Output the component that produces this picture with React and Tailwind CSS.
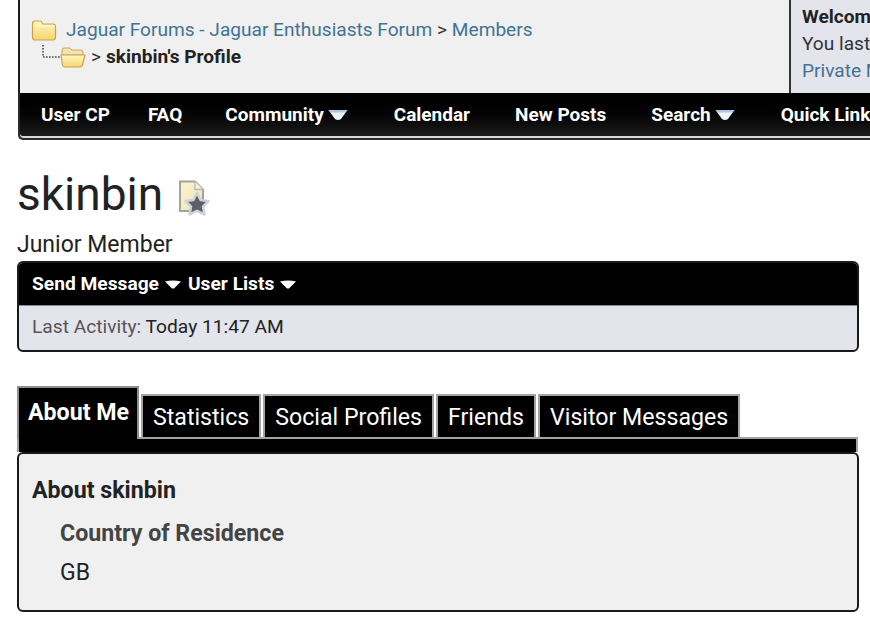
const Folder = ({ open, className }) => (
  <svg viewBox="0 0 26 22" className={className}>
    <defs>
      <linearGradient id={open ? "fo" : "fc"} x1="0" y1="0" x2="0" y2="1">
        <stop offset="0" stopColor="#fff6c0" />
        <stop offset="1" stopColor="#f5d66e" />
      </linearGradient>
    </defs>
    {open ? (
      <>
        <path d="M2 5 Q2 2 4 2 H10 L12 4 H21 Q23 4 23 6 V9 H2 Z" fill="#efe2b4" stroke="#cfa758" strokeWidth="1" />
        <path d="M1 9 H25 L22.5 19 Q22 21 20 21 H5 Q3 21 2.6 19 Z" fill="url(#fo)" stroke="#cf9f4a" strokeWidth="1.2" />
      </>
    ) : (
      <>
        <path d="M1.5 5 Q1.5 2 4 2 H10 L12 5 H22 Q24.5 5 24.5 7.5 V18 Q24.5 21 22 21 H4 Q1.5 21 1.5 18 Z" fill="url(#fc)" stroke="#cf9f4a" strokeWidth="1.2" />
        <path d="M2 7 H24" stroke="#fffbe6" strokeWidth="1" />
      </>
    )}
  </svg>
);

const NavArrow = () => (
  <svg viewBox="0 0 20 12" className="w-[20px] h-[12px] ml-[4px] blur-[0.4px]">
    <path d="M0.5 1 H19.5 L13 10 Q10 12 7 10 Z" fill="#eef5fb" />
    <path d="M0.5 1 H19.5 L17 3.5 H3 Z" fill="#a9c6e4" />
  </svg>
);

const SmallArrow = () => (
  <svg viewBox="0 0 16 9" className="w-[16px] h-[9px] ml-[6px] mt-[1px]">
    <path d="M0 1.5 Q8 -0.5 16 1.5 L9 8.5 H7 Z" fill="#ffffff" />
  </svg>
);

const ProfileIcon = () => (
  <svg viewBox="0 0 32 36" className="w-[32px] h-[36px] ml-[15px] mt-[17px] shrink-0 blur-[0.5px]">
    <defs>
      <linearGradient id="pg" x1="0" y1="0" x2="1" y2="1">
        <stop offset="0" stopColor="#fbf4d2" />
        <stop offset="1" stopColor="#efe3b4" />
      </linearGradient>
    </defs>
    <path d="M2 1.5 H17 L25 9.5 V31 H2 Z" fill="url(#pg)" stroke="#a3a399" strokeWidth="2" />
    <path d="M17 1.5 V9.5 H25" fill="#f7f3e2" stroke="#b8b8ae" strokeWidth="1.3" />
    <path d="M19 13 L22.6 20 L30.5 21 L25 26.6 L26.4 34.4 L19 30.8 L11.6 34.4 L13 26.6 L7.5 21 L15.4 20 Z" fill="#5b6068" stroke="#cfd3d8" strokeWidth="2.6" strokeLinejoin="round" />
  </svg>
);

const Tab = ({ children }) => (
  <div className="relative h-[45px] mr-[2px] flex items-center justify-center px-[10px] pt-[2px] bg-black border-2 border-[#a3a3a3] text-white text-[23.15px] leading-none whitespace-nowrap">
    {children}
  </div>
);

export default function App() {
  return (
    <div className="w-[870px] h-[619px] overflow-hidden bg-white text-[#222222] font-['Roboto',sans-serif]">
      <div className="w-[900px] ml-[18px]">
        <div className="h-[93px] flex bg-[#f0f0f1] border-l-2 border-[#1c1c1c]">
          <div className="w-[769px] shrink-0 pl-[11px] pt-[17px]">
            <div className="flex items-center h-[25px]">
              <Folder className="w-[26px] h-[22px] shrink-0" />
              <span className="ml-[9px] text-[19.1px] leading-none text-[#417394] whitespace-nowrap">
                Jaguar Forums - Jaguar Enthusiasts Forum <span className="text-[#333333]">&gt;</span> Members
              </span>
            </div>
            <div className="flex items-center h-[27px] mt-[1px]">
              <svg viewBox="0 0 18 14" className="w-[18px] h-[14px] ml-[11px] -mt-[9px] shrink-0">
                <path d="M1 0 V12 H18" fill="none" stroke="#444" strokeWidth="1.6" strokeDasharray="1.6 1.4" />
              </svg>
              <Folder open className="w-[26px] h-[22px] shrink-0" />
              <span className="ml-[5px] text-[19.1px] leading-none text-[#333]">&gt;</span>
              <span className="ml-[5px] text-[19.1px] leading-none font-bold text-[#222] whitespace-nowrap">skinbin's Profile</span>
            </div>
          </div>
          <div className="flex-1 bg-[#e4e4ec] border-l-2 border-[#333] pl-[11px] pt-[3px] text-[19.1px] leading-[27px] whitespace-nowrap">
            <div className="font-bold">Welcome, skinbin</div>
            <div className="text-[#333]">You last visited</div>
            <div className="text-[#417394]">Private Messages</div>
          </div>
        </div>
        <div className="h-[47px] rounded-bl-[5px] border-l-2 border-b-2 border-[#2a2a2a] bg-gradient-to-b from-black to-[#1e1e1e] shadow-[inset_0_-2px_0_#d8d8d8] flex items-center text-white text-[19px] font-bold whitespace-nowrap pb-[1px]">
          <span className="ml-[21px]">User CP</span>
          <span className="ml-[38px]">FAQ</span>
          <span className="ml-[43px] flex items-center">Community<NavArrow /></span>
          <span className="ml-[46px]">Calendar</span>
          <span className="ml-[45px]">New Posts</span>
          <span className="ml-[45px] flex items-center">Search<NavArrow /></span>
          <span className="ml-[46px]">Quick Links</span>
        </div>
      </div>

      <div className="w-[841px] ml-[17px]">
        <div className="flex items-start h-[91px] pt-[23px]">
          <h1 className="text-[46px] leading-[62px] font-normal text-[#222]">skinbin</h1>
          <ProfileIcon />
        </div>
        <div className="text-[23px] leading-[28px] h-[30px] text-[#222]">Junior Member</div>
        <div className="w-[842px] h-[91px] rounded-[6px] border-2 border-[#1a1a1a] overflow-hidden bg-[#e4e4ec]">
          <div className="h-[43px] bg-black border-b border-[#888] flex items-center pl-[13px] text-white font-bold text-[19.2px] whitespace-nowrap">
            Send Message<SmallArrow />
            <span className="ml-[7px]">User Lists</span><SmallArrow />
          </div>
          <div className="pl-[13px] pt-[9px] text-[19.2px] leading-[24px]">
            <span className="text-[#555]">Last Activity: </span>
            <span className="text-[#222]">Today 11:47 AM</span>
          </div>
        </div>

        <div className="mt-[33px] flex items-end h-[54px]">
          <div className="relative h-[53px] w-[122px] mr-[2px] bg-black border-t-2 border-x-2 border-[#8e8e8e] text-white text-[23.2px] font-bold leading-none pl-[9px] pt-[13px] whitespace-nowrap">
            About Me
          </div>
          <Tab>Statistics</Tab>
          <Tab>Social Profiles</Tab>
          <Tab>Friends</Tab>
          <Tab>Visitor Messages</Tab>
        </div>
        <div className="h-[15px] -mt-[2px] bg-black border-x-2 border-t-2 border-[#a3a3a3]" />
        <div className="w-[842px] h-[160px] rounded-[6px] border-2 border-[#1a1a1a] bg-[#f0f0f0] pl-[13px] pt-[20px]">
          <div className="text-[23.2px] leading-[32px] font-bold text-[#222]">About skinbin</div>
          <div className="pl-[28px] pt-[11px]">
            <div className="text-[23.2px] leading-[32px] font-bold text-[#444]">Country of Residence</div>
            <div className="text-[23px] leading-[32px] mt-[8px] text-[#222]">GB</div>
          </div>
        </div>
      </div>
    </div>
  );
}
